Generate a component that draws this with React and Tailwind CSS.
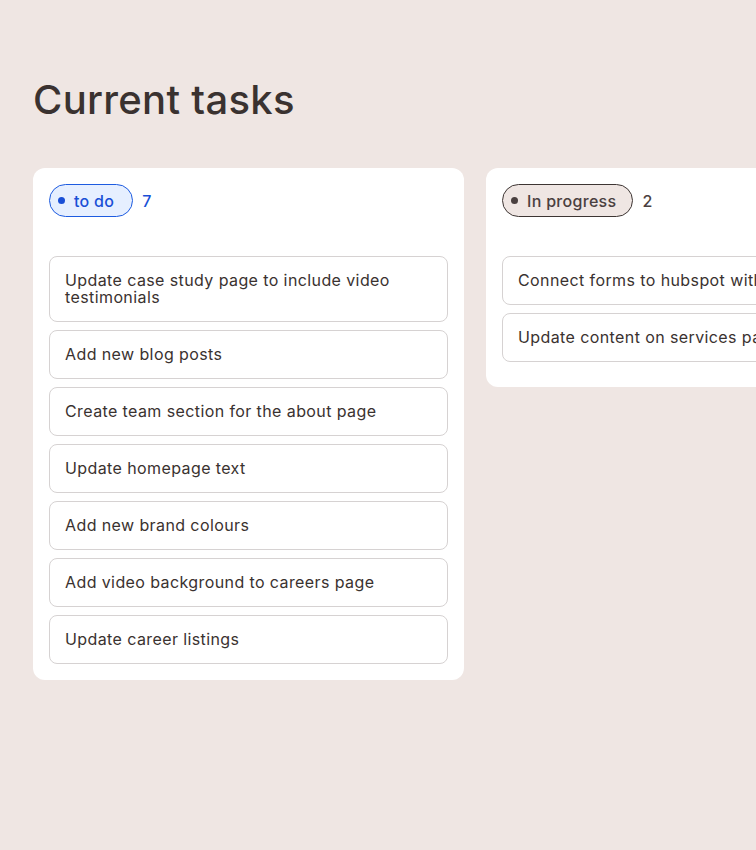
import React from "react";

const columns = [
  {
    label: "to do",
    count: 7,
    tone: "blue",
    tasks: [
      "Update case study page to include video testimonials",
      "Add new blog posts",
      "Create team section for the about page",
      "Update homepage text",
      "Add new brand colours",
      "Add video background to careers page",
      "Update career listings",
    ],
  },
  {
    label: "In progress",
    count: 2,
    tone: "neutral",
    nowrap: true,
    tasks: [
      "Connect forms to hubspot with zapier integration",
      "Update content on services page",
    ],
  },
];

function StatusPill({ label, count, tone }) {
  const blue = tone === "blue";
  return (
    <div className="flex items-center gap-[9px]">
      <span
        className={
          blue
            ? "flex items-center h-[33px] pl-2 pr-[18px] gap-[9px] rounded-full border border-[#1d5be0] bg-[#e6efff] text-[#1a4fd6] text-[16px] font-medium tracking-[0.3px]"
            : "flex items-center h-[33px] pl-2 pr-4 gap-[9px] rounded-full border border-[#3d3533] bg-[#efe6e3] text-[#4a4040] text-[16px] font-medium tracking-[0.3px]"
        }
      >
        <span
          className={
            blue
              ? "w-[7px] h-[7px] rounded-full bg-[#1a4fd6]"
              : "w-[7px] h-[7px] rounded-full bg-[#4a4040]"
          }
        />
        {label}
      </span>
      <span
        className={
          blue
            ? "text-[16px] font-medium text-[#1a4fd6]"
            : "text-[16px] font-medium text-[#4a4040]"
        }
      >
        {count}
      </span>
    </div>
  );
}

function Column({ label, count, tone, tasks, nowrap }) {
  return (
    <div
      className={`w-[431px] shrink-0 bg-white rounded-[12px] pt-4 px-4 ${
        nowrap ? "pb-[25px]" : "pb-4"
      }`}
    >
      <StatusPill label={label} count={count} tone={tone} />
      <div className="mt-[39px] flex flex-col gap-2">
        {tasks.map((t) => (
          <div
            key={t}
            className={`border border-[#d6d2d2] rounded-[8px] px-[15px] py-[15px] text-[16px] leading-[17px] tracking-[0.4px] text-[#3a3230] overflow-hidden ${
              nowrap ? "whitespace-nowrap" : ""
            }`}
          >
            {t}
          </div>
        ))}
      </div>
    </div>
  );
}

export default function App() {
  return (
    <div
      className="min-h-[850px] w-[756px] overflow-hidden bg-[#efe6e3] pt-[76px] pl-[33px]"
      style={{ fontFamily: "Inter, 'Noto Sans', sans-serif" }}
    >
      <h1 className="text-[40px] font-medium text-[#3a3230] leading-[48px] tracking-[0.3px]">
        Current tasks
      </h1>
      <div className="mt-[44px] flex items-start gap-[22px]">
        {columns.map((c) => (
          <Column key={c.label} {...c} />
        ))}
      </div>
    </div>
  );
}
